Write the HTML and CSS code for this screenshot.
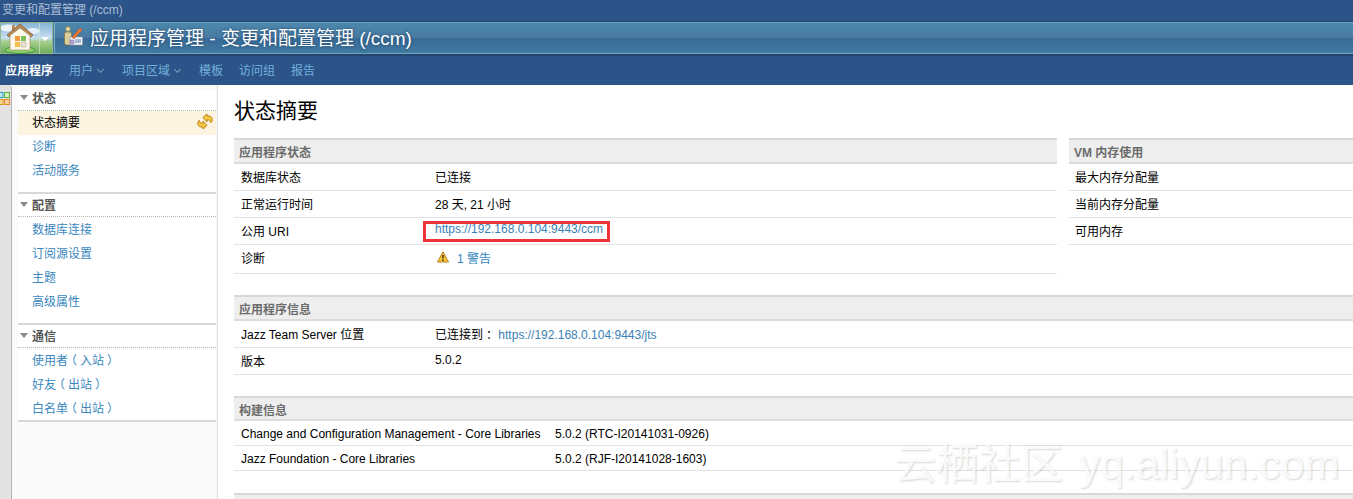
FILE: index.html
```html
<!DOCTYPE html>
<html lang="zh-CN">
<head>
<meta charset="UTF-8" />
<meta name="viewport" content="width=device-width, initial-scale=1" />
<title>状态摘要 - 变更和配置管理 (/ccm)</title>
<link rel="stylesheet" href="styles.css">
</head>
<body>
<header class="top">
    <div class="top-title">变更和配置管理 (/ccm)</div>
    <div class="banner">
        <a class="home" href="#">
            <svg class="home-icon" width="51" height="31" viewBox="0 0 51 31">
                <ellipse cx="8" cy="5" rx="9" ry="3.500" fill="#eef5fa"/>
                <ellipse cx="32" cy="8" rx="7" ry="3" fill="#e4eff7"/>
                <path d="M38.500 0 V31" stroke="#d8e8d8" stroke-opacity=".6"/>
                <ellipse cx="19" cy="27" rx="15" ry="3.500" fill="#8fd06a" stroke="#3f9a3c"/>
                <rect x="11" y="2" width="3" height="6" fill="#b98a55"/>
                <path d="M6 12 L19 1 L32 12 L30 14 L19 5 L8 14 Z" fill="#b98a55" stroke="#7d5a34" stroke-width=".8"/>
                <path d="M9 12.500 L19 5 L29 12.500 V27 H9 Z" fill="#fdf8ea" stroke="#a89878" stroke-width=".8"/>
                <rect x="14" y="13" width="5" height="5" fill="#f19a3e"/>
                <rect x="20" y="13" width="5" height="5" fill="#7cc05a"/>
                <rect x="14" y="19" width="5" height="5" fill="#f5c04a"/>
                <rect x="20" y="19" width="5" height="5" fill="#e8e2cf" stroke="#b0a888" stroke-width=".5"/>
            </svg>
            <span class="home-arrow"></span>
        </a>
        <div class="banner-title">
            <svg class="app-icon" width="19" height="20" viewBox="2 1 19 20">
                <rect x="2.500" y="7" width="7" height="13" rx="2" fill="#d8cf9a" stroke="#7b7440" stroke-width=".7"/>
                <circle cx="6" cy="4" r="2.500" fill="#e0d8a8" stroke="#7b7440" stroke-width=".7"/>
                <rect x="8" y="12" width="12.500" height="8" fill="#f4f6fa" stroke="#8a94a8" stroke-width=".6"/>
                <path d="M13 15 H19 M13 17 H19" stroke="#5b7fb0" stroke-width="1"/>
                <circle cx="10" cy="17" r="2.200" fill="#b9a4d8" stroke="#6d5a96" stroke-width=".5"/>
                <path d="M10 12 L18 3 L20 5 L12 14 Z" fill="#ee7a3a" stroke="#a84a1c" stroke-width=".5"/>
            </svg>
            <h1>应用程序管理 - 变更和配置管理 (/ccm)</h1>
        </div>
    </div>
    <nav class="nav">
        <a class="nav-item active" href="#">应用程序</a>
        <a class="nav-item drop" href="#">用户</a>
        <a class="nav-item drop" href="#">项目区域</a>
        <a class="nav-item" href="#">模板</a>
        <a class="nav-item" href="#">访问组</a>
        <a class="nav-item" href="#">报告</a>
    </nav>
</header>

<div class="page">
    <div class="rail">
        <svg width="11" height="13" viewBox="0 0 11 13">
            <rect x="-2" y=".5" width="5" height="5" fill="#bfe6f2" stroke="#2ea3c4"/>
            <rect x="4.500" y=".5" width="5" height="5" fill="#d4efc0" stroke="#62b040"/>
            <rect x="-2" y="7.500" width="5" height="5" fill="#f8d890" stroke="#d09a20"/>
            <rect x="4.500" y="7.500" width="5" height="5" fill="#fbcf9c" stroke="#e58a2c"/>
        </svg>
    </div>

    <aside class="side">
        <section class="side-group">
            <h3 class="side-head">状态</h3>
            <a class="side-link current" href="#">状态摘要
                <svg class="sync" width="16" height="17" viewBox="0 0 16 17">
                    <path d="M6 4.500 L10 1 V3 H12 C14.500 3 15.800 5.500 15 8.500 L13.500 9.500 C13.500 7.800 12.500 6.800 10 6.800 V9 Z" fill="#f5c842" stroke="#b07a10" stroke-width=".9" stroke-linejoin="round"/>
                    <path d="M10 12.500 L6 16 V14 H4 C1.500 14 .2 11.500 1 8.500 L2.500 7.500 C2.500 9.200 3.500 10.200 6 10.200 V8 Z" fill="#f5c842" stroke="#b07a10" stroke-width=".9" stroke-linejoin="round"/>
                </svg>
            </a>
            <a class="side-link" href="#">诊断</a>
            <a class="side-link" href="#">活动服务</a>
        </section>
        <section class="side-group">
            <h3 class="side-head">配置</h3>
            <a class="side-link" href="#">数据库连接</a>
            <a class="side-link" href="#">订阅源设置</a>
            <a class="side-link" href="#">主题</a>
            <a class="side-link" href="#">高级属性</a>
        </section>
        <section class="side-group">
            <h3 class="side-head">通信</h3>
            <a class="side-link" href="#"><span>使用者<i class="fw">（</i>入站<i class="fw">）</i></span></a>
            <a class="side-link" href="#"><span>好友<i class="fw">（</i>出站<i class="fw">）</i></span></a>
            <a class="side-link" href="#"><span>白名单<i class="fw">（</i>出站<i class="fw">）</i></span></a>
        </section>
    </aside>

    <main class="main">
        <h2 class="page-title">状态摘要</h2>

        <div class="columns">
            <section class="panel">
                <h4 class="panel-head">应用程序状态</h4>
                <div class="row"><span class="key">数据库状态</span><span>已连接</span></div>
                <div class="row"><span class="key">正常运行时间</span><span>28 天, 21 小时</span></div>
                <div class="row"><span class="key">公用 URI</span><a class="marked" href="#">https://192.168.0.104:9443/ccm</a></div>
                <div class="row tall">
                    <span class="key">诊断</span>
                    <a class="warn" href="#">
                        <svg width="12" height="12" viewBox="0 0 12 12">
                            <path d="M6 .8 L11.500 11 H.5 Z" fill="#f7c33c" stroke="#b8801a" stroke-linejoin="round"/>
                            <path d="M6 4 V7.500 M6 8.500 V10" stroke="#3a2a08" stroke-width="1.400"/>
                        </svg>
                        1 警告
                    </a>
                </div>
            </section>
            <section class="panel vm">
                <h4 class="panel-head">VM 内存使用</h4>
                <div class="row"><span>最大内存分配量</span></div>
                <div class="row"><span>当前内存分配量</span></div>
                <div class="row"><span>可用内存</span></div>
            </section>
        </div>

        <section class="panel info">
            <h4 class="panel-head">应用程序信息</h4>
            <div class="row"><span class="key">Jazz Team Server 位置</span><span>已连接到<i class="fw">：</i> <a class="url" href="#">https://192.168.0.104:9443/jts</a></span></div>
            <div class="row"><span class="key">版本</span><span>5.0.2</span></div>
        </section>

        <section class="panel build">
            <h4 class="panel-head">构建信息</h4>
            <div class="row short"><span class="key wide">Change and Configuration Management - Core Libraries</span><span>5.0.2 (RTC-I20141031-0926)</span></div>
            <div class="row short"><span class="key wide">Jazz Foundation - Core Libraries</span><span>5.0.2 (RJF-I20141028-1603)</span></div>
        </section>

        <div class="panel-head next"></div>
    </main>
</div>

<div class="watermark">云栖社区 yq.aliyun.com</div>
</body>
</html>
```

FILE: styles.css
```css
html, body {
    height: 100%;
}
body {
    margin: 0;
    height: 499px;
    overflow: hidden;
    position: relative;
    font-family: "Liberation Sans", "Noto Sans CJK SC", sans-serif;
    font-size: 12px;
    color: #000;
    background-color: #fff;
}
a {
    text-decoration: none;
}
/* full-width punctuation drawn centred in its em box */
.fw {
    display: inline-block;
    width: 12px;
    text-align: center;
    font-style: normal;
    font-feature-settings: "halt";
}

/* header */
.top {
    background-color: #2c5488;
}
.top-title {
    height: 21px;
    padding: 2px 0 0 2px;
    box-sizing: border-box;
    line-height: 16px;
    color: #a9bdd6;
}
.banner {
    display: flex;
    height: 35px;
    gap: 1px;
    box-sizing: border-box;
    border-top: 1px solid #20416b;
    border-bottom: 2px solid #25436f;
    background: linear-gradient(#7fb3c8 0, #4c88ab 4%, #4a7aa3 49%, #386b98 50%, #41799f 96%, #67a6bf 97%, #67a6bf 100%);
}
.home {
    position: relative;
    width: 53px;
    flex-shrink: 0;
    box-sizing: border-box;
    border: 1px solid #8fb98a;
    background: linear-gradient(#86b6d8 0, #c8def0 50%, #a6cf8f 62%, #6fae58 100%);
}
.home-icon {
    display: block;
}
.home-arrow {
    position: absolute;
    right: 3px;
    top: 14px;
    border-left: 4px solid transparent;
    border-right: 4px solid transparent;
    border-top: 4px solid #fff;
}
.banner-title {
    flex: 1;
    display: flex;
    align-items: center;
    padding: 0 0 4px 9px;
    border-left: 1px solid #7fb0c8;
    border-radius: 4px 0 0 4px;
}
.app-icon {
    margin-right: 7px;
}
.banner-title h1 {
    margin: 0;
    font-size: 19px;
    font-weight: 400;
    color: #fff;
    white-space: nowrap;
    text-shadow: 0 0 3px #1f4468;
}
.nav {
    display: flex;
    height: 29px;
    box-sizing: border-box;
    align-items: center;
    padding: 0 0 2px 5px;
    gap: 16px;
}
.nav-item {
    color: #72b0dc;
}
.nav-item.active {
    color: #fff;
    font-weight: 700;
}
.nav-item.drop::after {
    content: "";
    display: inline-block;
    width: 4px;
    height: 4px;
    margin: 0 3px 3px 5px;
    border-right: 1px solid #7f9cc0;
    border-bottom: 1px solid #7f9cc0;
    transform: rotate(45deg);
}

/* page layout */
.page {
    display: flex;
    height: 414px;
}
.rail {
    width: 12px;
    flex-shrink: 0;
    padding-top: 7px;
    box-sizing: border-box;
    background-color: #e2e2e2;
    border-right: 1px solid #b4b4b4;
    border-radius: 0 4px 0 0;
    overflow: hidden;
}
.rail svg {
    display: block;
}
.side {
    width: 206px;
    flex-shrink: 0;
    box-sizing: border-box;
    padding: 6px 1px 0 6px;
    background-color: #fafafa;
    border-right: 1px solid #dcdcdc;
}
.side-group {
    background-color: #fff;
    border-bottom: 2px solid #d8d8d8;
    padding-bottom: 10px;
}
.side-group:first-child {
    padding-bottom: 9px;
}
.side-group:last-child {
    padding-bottom: 0;
}
.side-head {
    position: relative;
    margin: 0;
    height: 20px;
    padding: 0 0 0 14px;
    box-sizing: border-box;
    line-height: 16px;
    font-size: 12px;
    font-weight: 700;
    color: #555;
    border-bottom: 1px dotted #b8b8b8;
}
.side-group + .side-group .side-head {
    height: 23px;
    padding-top: 4px;
}
.side-head::before {
    content: "";
    position: absolute;
    left: 2px;
    top: 4px;
    border-left: 4px solid transparent;
    border-right: 4px solid transparent;
    border-top: 5px solid #8a8a8a;
}
.side-group + .side-group .side-head::before {
    top: 8px;
}
.side-link {
    display: flex;
    align-items: center;
    justify-content: space-between;
    height: 24px;
    box-sizing: border-box;
    padding: 0 3px 2px 14px;
    color: #3b87bd;
}
.side-group:first-child .side-link {
    padding-bottom: 4px;
}
.side-link.current {
    color: #000;
    background-color: #fdf3e1;
}

/* main content */
.main {
    flex: 1;
    min-width: 0;
    padding: 0 0 0 16px;
}
.page-title {
    margin: 0;
    height: 53px;
    padding-top: 11px;
    box-sizing: border-box;
    line-height: 29px;
    font-size: 21px;
    font-weight: 400;
}
.columns {
    display: flex;
    gap: 12px;
    height: 157px;
}
.columns .panel {
    width: 823px;
    flex-shrink: 0;
}
.columns .panel.vm {
    flex: 1;
    width: auto;
    margin-right: -1px;
}
.panel-head {
    margin: 0;
    height: 26px;
    padding: 4px 0 0 5px;
    box-sizing: border-box;
    line-height: 18px;
    font-size: 12px;
    font-weight: 700;
    color: #6b6b6b;
    background-color: #eee;
    border-top: 2px solid #d8d8d8;
    border-bottom: 2px solid #dcdcdc;
}
.row {
    display: flex;
    align-items: center;
    height: 27px;
    box-sizing: border-box;
    padding: 0 0 2px 7px;
    border-bottom: 1px solid #e2e2e2;
}
.row.tall {
    height: 29px;
    padding-bottom: 4px;
}
.row.short {
    height: 25px;
    padding: 1px 0 0 7px;
}
.key {
    width: 194px;
    flex-shrink: 0;
}
.key.wide {
    width: 314px;
}
.vm .row {
    padding-left: 6px;
}
.marked {
    box-sizing: border-box;
    height: 21px;
    margin: 3px 0 0 -12px;
    padding: 0 4px 0 9px;
    line-height: 11px;
    color: #3b7fb5;
    border: 3px solid #ee3338;
}
.warn {
    display: flex;
    align-items: center;
    gap: 8px;
    margin-left: 2px;
    color: #2e86c1;
}
.url {
    color: #3b7fb5;
}
.info {
    height: 101px;
}
.build {
    height: 97px;
}
.build .panel-head {
    height: 25px;
}
.panel-head.next {
    height: 10px;
    border-bottom: 0;
}

/* watermark laid over the page */
.watermark {
    position: absolute;
    left: 894px;
    top: 442px;
    font-size: 42px;
    line-height: 46px;
    word-spacing: 4px;
    letter-spacing: .3px;
    white-space: nowrap;
    color: rgba(255, 255, 255, 0.85);
    text-shadow: 1px 1px 2px rgba(0, 0, 0, 0.16);
}
```
